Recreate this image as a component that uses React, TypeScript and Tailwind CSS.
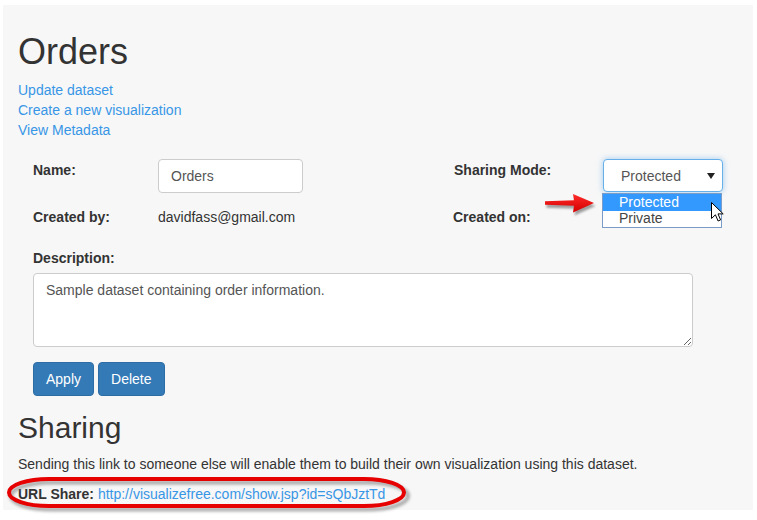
import React from 'react'

const font = { fontFamily: '"Liberation Sans", Arial, Helvetica, sans-serif' }

function SelectArrow() {
  return (
    <svg width="8" height="6" viewBox="0 0 8 6" className="block">
      <polygon points="0,0 8,0 4,6" fill="#222" />
    </svg>
  )
}

function RedArrow() {
  return (
    <svg width="64" height="32" viewBox="0 0 64 32" className="absolute left-[540px] top-[188px]">
      <defs>
        <filter id="arrowShadow" x="-20%" y="-30%" width="140%" height="170%">
          <feGaussianBlur stdDeviation="1.2" />
        </filter>
        <linearGradient id="arrowFill" x1="0" y1="0" x2="0" y2="1">
          <stop offset="0" stopColor="#ff2a2a" />
          <stop offset="1" stopColor="#d40000" />
        </linearGradient>
      </defs>
      {/* shadow */}
      <g transform="translate(1.5 3)" filter="url(#arrowShadow)" opacity="0.55">
        <path d="M5 13.2 L34 12.3 L33 6 L54 15 L33 24.5 L34 17.7 L5 16.8 Z" fill="#555" />
      </g>
      <path d="M5 13.2 L34 12.3 L33 6 L54 15 L33 24.5 L34 17.7 L5 16.8 Z" fill="url(#arrowFill)" />
    </svg>
  )
}

function Cursor() {
  return (
    <svg width="14" height="21" viewBox="0 0 14 21" className="absolute left-[711px] top-[202px]">
      <path
        d="M0.5 0.5 V16.5 L4.4 12.8 L7.1 19 L9.6 17.9 L7 11.9 H12.2 Z"
        fill="#fff"
        stroke="#000"
        strokeWidth="1"
        strokeLinejoin="round"
      />
    </svg>
  )
}

function ShareEllipse() {
  return (
    <svg width="440" height="50" viewBox="0 0 440 50" className="absolute left-0 top-[470px] pointer-events-none">
      <defs>
        <filter id="ellShadow" x="-5%" y="-40%" width="110%" height="180%">
          <feGaussianBlur stdDeviation="1.5" />
        </filter>
      </defs>
      <rect x="11" y="12.5" width="397" height="27" rx="40" ry="13.5" fill="none" stroke="#777" strokeWidth="4" opacity="0.6" filter="url(#ellShadow)" />
      <rect x="9" y="9" width="395" height="27" rx="40" ry="13.5" fill="none" stroke="#e60000" strokeWidth="4" />
    </svg>
  )
}

export default function App() {
  return (
    <div className="relative w-[757px] h-[520px] bg-white overflow-hidden text-[14px] leading-[20px] text-[#333]" style={font}>
      <div className="ml-[3px] mt-[5px] w-[750px] h-[505px] bg-[#f7f7f7] px-[15px] pt-[27px]">
        <h1 className="text-[36px] leading-[40px] h-[40px] font-normal text-[#333]">Orders</h1>

        {/* Links */}
        <div className="mt-[8px] flex flex-col items-start text-[#3896e6]">
          <a className="leading-[20px]">Update dataset</a>
          <a className="leading-[20px]">Create a new visualization</a>
          <a className="leading-[20px]">View Metadata</a>
        </div>

        {/* Form */}
        <div className="mt-[19px] px-[15px]">
          <div className="grid grid-cols-[125px_296px_149px_120px] items-start">
            <div className="font-bold pt-[1px]">Name:</div>
            <div className="w-[145px] h-[34px] bg-white border border-[#ccc] rounded-[4px] px-[12px] flex items-center text-[#555]">
              Orders
            </div>
            <div className="font-bold pt-[1px]">Sharing Mode:</div>
            <div className="relative">
              <div className="w-[120px] h-[33px] bg-white border border-[#66afe9] rounded-[4px] shadow-[0_0_6px_rgba(102,175,233,0.6)] pl-[17px] pr-[7px] flex items-center justify-between text-[#555]">
                <span>Protected</span>
                <SelectArrow />
              </div>
              {/* Open dropdown list */}
              <div className="absolute left-[-1px] top-[34px] w-[120px] bg-white border border-[#7a9cc6] flex flex-col">
                <div className="h-[17px] leading-[17px] bg-[#3399ff] text-white pl-[16px]">Protected</div>
                <div className="h-[16px] leading-[15px] text-[#444] pl-[16px]">Private</div>
              </div>
            </div>
          </div>

          <div className="mt-[14px] grid grid-cols-[125px_295px_150px_120px] items-start">
            <div className="font-bold">Created by:</div>
            <div>davidfass@gmail.com</div>
            <div className="font-bold">Created on:</div>
            <div></div>
          </div>

          <div className="mt-[21px] font-bold">Description:</div>
          <textarea
            readOnly
            defaultValue="Sample dataset containing order information."
            className="mt-[5px] block w-[660px] h-[74px] bg-white border border-[#ccc] rounded-[4px] px-[12px] py-[6px] text-[#555] text-[14px] leading-[20px] outline-none resize-y"
            style={font}
          />

          <div className="mt-[15px] flex gap-[4px]">
            <button className="h-[34px] px-[12px] bg-[#337ab7] border border-[#2e6da4] rounded-[4px] text-white">Apply</button>
            <button className="h-[34px] px-[12px] bg-[#337ab7] border border-[#2e6da4] rounded-[4px] text-white">Delete</button>
          </div>
        </div>

        {/* Sharing */}
        <h2 className="mt-[15px] text-[30px] leading-[33px] font-normal text-[#333]">Sharing</h2>
        <p className="mt-[10px]">Sending this link to someone else will enable them to build their own visualization using this dataset.</p>
        <p className="mt-[10px]">
          <span className="font-bold">URL Share:</span>{' '}
          <a className="text-[#3896e6]">http://visualizefree.com/show.jsp?id=sQbJztTd</a>
        </p>
      </div>

      <RedArrow />
      <Cursor />
      <ShareEllipse />
    </div>
  )
}
